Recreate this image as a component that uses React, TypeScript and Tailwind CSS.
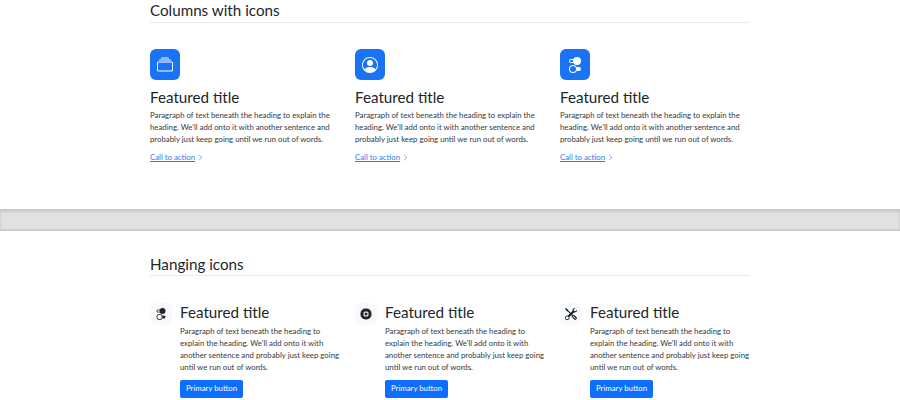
import { BsCollection, BsPersonCircle, BsToggles2, BsTools, BsChevronRight } from "react-icons/bs";

const text =
  "Paragraph of text beneath the heading to explain the heading. We'll add onto it with another sentence and probably just keep going until we run out of words.";

// the cpu icon reads as a solid ring at this size, its pins blur together
function ChipIcon({ size }: { size: number }) {
  return (
    <svg width={size} height={size} viewBox="0 0 12 12" fill="currentColor">
      <rect x="0.5" y="0.5" width="11" height="11" rx="5" />
      <rect x="3.5" y="3.5" width="5" height="5" rx="1.5" fill="#e8e8e8" />
      <rect x="4.75" y="4.75" width="2.5" height="2.5" rx="0.5" />
    </svg>
  );
}

const columns = [BsCollection, BsPersonCircle, BsToggles2];
const hanging = [BsToggles2, ChipIcon, BsTools];

export default function App() {
  return (
    <div className="h-[400px] w-[900px] overflow-hidden bg-white font-['Lato',sans-serif] text-[#212529]">
      <section className="h-[209px] px-[150px]">
        <h2 className="h-[23px] border-b border-[#e9ecef] text-[15.2px] leading-[21px]">Columns with icons</h2>
        <div className="mt-[26px] flex gap-[25px]">
          {columns.map((Icon, i) => (
            <div key={i} className="w-[180px]">
              <div className="flex h-[31px] w-[30px] items-center justify-center rounded-md bg-[#1a73f5] text-white">
                <Icon size={16} />
              </div>
              <h3 className="mt-[7px] text-[15.2px] leading-[21px]">Featured title</h3>
              <p className="mt-[1px] text-[7.8px] leading-[12px] text-[#343a40]">{text}</p>
              <a className="mt-[6px] flex items-center gap-[2px] text-[7.8px] leading-[12px] text-[#2f7bf0]">
                <span className="underline">Call to action</span>
                <BsChevronRight size={7} />
              </a>
            </div>
          ))}
        </div>
      </section>

      <div className="h-[22px] border-y border-[#c9c9c9] bg-[#e1e1e1] shadow-[inset_0_2px_3px_rgba(0,0,0,0.1),inset_0_-1px_2px_rgba(0,0,0,0.08)]" />

      <section className="px-[150px] pt-[24px]">
        <h2 className="h-[21px] border-b border-[#e9ecef] text-[15.2px] leading-[18px]">Hanging icons</h2>
        <div className="mt-[27px] flex gap-[25px]">
          {hanging.map((Icon, i) => (
            <div key={i} className="flex w-[180px]">
              <div className="flex h-[22px] w-[22px] shrink-0 items-center justify-center rounded-md bg-[#f8f9fa] text-[#212529]">
                <Icon size={12} />
              </div>
              <div className="ml-[8px] w-[165px] shrink-0">
                <h3 className="text-[15.2px] leading-[18px]">Featured title</h3>
                <p className="mt-[4px] text-[7.8px] leading-[12px] text-[#343a40]">{text}</p>
                <button className="mt-[4px] h-[18px] w-[63px] rounded-[2px] bg-[#0d6efd] text-[7.8px] text-white">
                  Primary button
                </button>
              </div>
            </div>
          ))}
        </div>
      </section>
    </div>
  );
}
